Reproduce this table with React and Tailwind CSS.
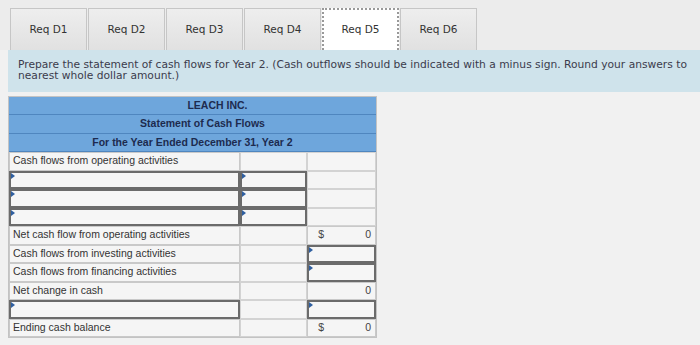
import React from "react";

const tabs = ["Req D1", "Req D2", "Req D3", "Req D4", "Req D5", "Req D6"];

// small blue marker shown on editable cells
function Marker() {
  return (
    <span className="absolute left-0 top-0 w-0 h-0 border-t-[3px] border-b-[3px] border-l-[4px] border-t-transparent border-b-transparent border-l-[#2f5fa0]" />
  );
}

function Cell({ kind = "empty", text, w, dollar, value }) {
  if (kind === "input") {
    return (
      <div className={`relative ${w} h-full border-2 border-[#6b6b6b] bg-[#f6f6f6]`}>
        <Marker />
      </div>
    );
  }
  if (kind === "label") {
    return (
      <div className={`${w} h-full border border-[#c9c9c9] bg-[#f5f5f5] pl-[3px] flex items-center text-[10.5px] text-[#333]`}>
        {text}
      </div>
    );
  }
  if (kind === "value") {
    return (
      <div className={`${w} h-full border border-[#c9c9c9] bg-[#f5f5f5] flex items-center justify-between pl-[10px] pr-[4px] text-[10.5px] text-[#444]`}>
        <span>{dollar ? "$" : ""}</span>
        <span>{value}</span>
      </div>
    );
  }
  return <div className={`${w} h-full border border-[#d3d3d3] bg-[#f5f5f5]`} />;
}

const rows = [
  [{ kind: "label", text: "Cash flows from operating activities" }, {}, {}],
  [{ kind: "input" }, { kind: "input" }, {}],
  [{ kind: "input" }, { kind: "input" }, {}],
  [{ kind: "input" }, { kind: "input" }, {}],
  [{ kind: "label", text: "Net cash flow from operating activities" }, {}, { kind: "value", dollar: true, value: "0" }],
  [{ kind: "label", text: "Cash flows from investing activities" }, {}, { kind: "input" }],
  [{ kind: "label", text: "Cash flows from financing activities" }, {}, { kind: "input" }],
  [{ kind: "label", text: "Net change in cash" }, {}, { kind: "value", value: "0" }],
  [{ kind: "input" }, {}, { kind: "input" }],
  [{ kind: "label", text: "Ending cash balance" }, {}, { kind: "value", dollar: true, value: "0" }],
];

const widths = ["w-[232px]", "w-[68px]", "w-[69px]"];

export default function App() {
  return (
    <div className="w-[700px] h-[345px] overflow-hidden bg-[#f1f1f1] font-['Liberation_Sans',Arial,sans-serif]">
      <div className="flex pl-[10px] pt-[8px] bg-[#ececec]">
        {tabs.map((t, i) => (
          <div
            key={t}
            className={
              i === 4
                ? "w-[77px] h-[42px] mr-px flex items-center justify-center bg-white border-2 border-b-0 border-dotted border-[#999] text-[10.5px] text-[#333] font-['DejaVu_Sans',Verdana,sans-serif]"
                : "w-[77px] h-[42px] mr-px flex items-center justify-center bg-gradient-to-b from-[#eeeeee] to-[#e1e1e1] border border-b-0 border-[#c6c6c6] text-[10.5px] text-[#333] font-['DejaVu_Sans',Verdana,sans-serif]"
            }
          >
            {t}
          </div>
        ))}
      </div>
      <div className="ml-2 h-[42px] bg-[#cfe3eb] pl-[10px] pt-[9px] text-[10.7px] leading-[11px] text-[#3b3b4b] font-['DejaVu_Sans',Verdana,sans-serif]">
        Prepare the statement of cash flows for Year 2. (Cash outflows should be indicated with a minus sign. Round your answers to nearest whole dollar amount.)
      </div>
      <div className="ml-2 mt-[4px] w-[369px] border border-[#c3c3c3]">
        <div className="bg-[#6ea6dc] text-[#1d2b4f] font-bold text-[10.5px]">
          <div className="h-[18px] flex items-center justify-center border-b border-[#4f86bf] pl-[50px]">LEACH INC.</div>
          <div className="h-[19px] flex items-center justify-center border-b border-[#4f86bf] pl-[20px]">Statement of Cash Flows</div>
          <div className="h-[18px] flex items-center justify-center border-b border-[#4f86bf]">For the Year Ended December 31, Year 2</div>
        </div>
        {rows.map((r, i) => (
          <div key={i} className="flex h-[18.5px]">
            {r.map((c, j) => (
              <Cell key={j} {...c} w={widths[j]} />
            ))}
          </div>
        ))}
      </div>
    </div>
  );
}
